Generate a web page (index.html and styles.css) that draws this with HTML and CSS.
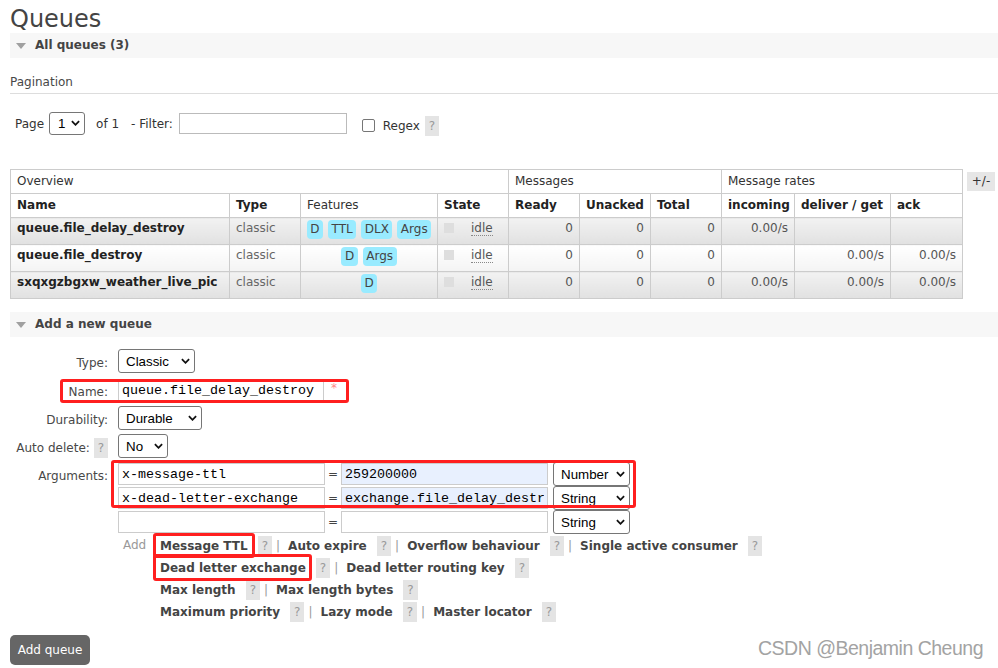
FILE: index.html
```html
<!DOCTYPE html>
<html lang="en">
<head>
<meta charset="utf-8">
<title>Queues</title>
<link rel="stylesheet" href="styles.css">
</head>
<body>
<div class="page">
  <h1 class="title">Queues</h1>
  <div class="section-head"><span class="tri"></span>All queues (3)</div>
  <h3 class="pag-title">Pagination</h3>
  <div class="pager">
    <span>Page</span>
    <span class="sel sel-page"><select><option>1</option></select><svg class="chev" viewBox="0 0 10 6"><path d="M1 1 L5 5 L9 1"/></svg></span>
    <span class="of">of 1</span>
    <span class="filter-label">- Filter:</span>
    <input class="filter" type="text">
    <span class="regex"><input type="checkbox" class="cb"><span class="regex-label">Regex</span><span class="help">?</span></span>
  </div>

  <div class="table-wrap">
    <table class="list">
      <colgroup>
        <col class="c-name"><col class="c-type"><col class="c-feat"><col class="c-state">
        <col class="c-num"><col class="c-num"><col class="c-num">
        <col class="c-inc"><col class="c-del"><col class="c-ack">
      </colgroup>
      <thead>
        <tr class="grp">
          <th colspan="4">Overview</th>
          <th colspan="3">Messages</th>
          <th colspan="3">Message rates</th>
        </tr>
        <tr class="cols">
          <th>Name</th><th>Type</th><th class="normal">Features</th><th>State</th>
          <th>Ready</th><th>Unacked</th><th>Total</th>
          <th>incoming</th><th>deliver / get</th><th>ack</th>
        </tr>
      </thead>
      <tbody>
        <tr class="alt1">
          <td class="qname">queue.file_delay_destroy</td>
          <td class="qtype">classic</td>
          <td class="feat"><div class="badges"><span class="badge">D</span><span class="badge">TTL</span><span class="badge">DLX</span><span class="badge">Args</span></div></td>
          <td><span class="status"></span><abbr class="idle">idle</abbr></td>
          <td class="r">0</td><td class="r">0</td><td class="r">0</td>
          <td class="r">0.00/s</td><td class="r"></td><td class="r"></td>
        </tr>
        <tr class="alt2">
          <td class="qname">queue.file_destroy</td>
          <td class="qtype">classic</td>
          <td class="feat"><div class="badges"><span class="badge">D</span><span class="badge">Args</span></div></td>
          <td><span class="status"></span><abbr class="idle">idle</abbr></td>
          <td class="r">0</td><td class="r">0</td><td class="r">0</td>
          <td class="r"></td><td class="r">0.00/s</td><td class="r">0.00/s</td>
        </tr>
        <tr class="alt1">
          <td class="qname">sxqxgzbgxw_weather_live_pic</td>
          <td class="qtype">classic</td>
          <td class="feat"><div class="badges"><span class="badge">D</span></div></td>
          <td><span class="status"></span><abbr class="idle">idle</abbr></td>
          <td class="r">0</td><td class="r">0</td><td class="r">0</td>
          <td class="r">0.00/s</td><td class="r">0.00/s</td><td class="r">0.00/s</td>
        </tr>
      </tbody>
    </table>
    <span class="toggle">+/-</span>
  </div>

  <div class="section-head second"><span class="tri"></span>Add a new queue</div>

  <div class="form">
    <div class="frow r-type">
      <label class="flabel">Type:</label>
      <span class="sel sel-type"><select><option>Classic</option></select><svg class="chev" viewBox="0 0 10 6"><path d="M1 1 L5 5 L9 1"/></svg></span>
    </div>
    <div class="frow r-name">
      <label class="flabel">Name:</label>
      <input class="tinput name-input" type="text" value="queue.file_delay_destroy">
      <span class="mand">*</span>
      <span class="mark mark-name"></span>
    </div>
    <div class="frow r-dur">
      <label class="flabel">Durability:</label>
      <span class="sel sel-dur"><select><option>Durable</option></select><svg class="chev" viewBox="0 0 10 6"><path d="M1 1 L5 5 L9 1"/></svg></span>
    </div>
    <div class="frow r-auto">
      <label class="flabel">Auto delete: <span class="help">?</span></label>
      <span class="sel sel-auto"><select><option>No</option></select><svg class="chev" viewBox="0 0 10 6"><path d="M1 1 L5 5 L9 1"/></svg></span>
    </div>
    <div class="frow r-args">
      <label class="flabel">Arguments:</label>
      <div class="args">
        <div class="arg">
          <input class="tinput kinput" type="text" value="x-message-ttl">
          <span class="eq">=</span>
          <input class="tinput vinput filled" type="text" value="259200000">
          <span class="sel sel-argtype"><select><option>Number</option></select><svg class="chev" viewBox="0 0 10 6"><path d="M1 1 L5 5 L9 1"/></svg></span>
        </div>
        <div class="arg">
          <input class="tinput kinput" type="text" value="x-dead-letter-exchange">
          <span class="eq">=</span>
          <input class="tinput vinput filled" type="text" value="exchange.file_delay_destroy">
          <span class="sel sel-argtype"><select><option>String</option></select><svg class="chev" viewBox="0 0 10 6"><path d="M1 1 L5 5 L9 1"/></svg></span>
        </div>
        <div class="arg">
          <input class="tinput kinput" type="text" value="">
          <span class="eq">=</span>
          <input class="tinput vinput" type="text" value="">
          <span class="sel sel-argtype"><select><option>String</option></select><svg class="chev" viewBox="0 0 10 6"><path d="M1 1 L5 5 L9 1"/></svg></span>
        </div>
      </div>
      <span class="mark mark-args"></span>
    </div>
    <div class="frow r-links">
      <span class="flabel-empty"></span>
      <span class="add-word">Add</span>
      <div class="links">
        <div class="lrow"><span class="alink">Message TTL</span><span class="help">?</span><span class="sep">|</span><span class="alink">Auto expire</span><span class="help">?</span><span class="sep">|</span><span class="alink">Overflow behaviour</span><span class="help">?</span><span class="sep">|</span><span class="alink">Single active consumer</span><span class="help">?</span></div>
        <div class="lrow"><span class="alink">Dead letter exchange</span><span class="help">?</span><span class="sep">|</span><span class="alink">Dead letter routing key</span><span class="help">?</span></div>
        <div class="lrow"><span class="alink">Max length</span><span class="help">?</span><span class="sep">|</span><span class="alink">Max length bytes</span><span class="help">?</span></div>
        <div class="lrow"><span class="alink">Maximum priority</span><span class="help">?</span><span class="sep">|</span><span class="alink">Lazy mode</span><span class="help">?</span><span class="sep">|</span><span class="alink">Master locator</span><span class="help">?</span></div>
      </div>
      <span class="mark mark-ttl"></span>
      <span class="mark mark-dlx"></span>
    </div>
  </div>

  <button class="add-btn" type="button">Add queue</button>
</div>
<div class="watermark">CSDN @Benjamin Cheung</div>
</body>
</html>
```

FILE: styles.css
```css
* { box-sizing: border-box; }
html, body { margin: 0; padding: 0; background: #fff; }
body {
  font-family: "DejaVu Sans", Verdana, sans-serif;
  font-size: 12px;
  color: #484848;
  width: 998px;
  height: 668px;
  overflow: hidden;
  position: relative;
}
.page { padding-left: 10px; }

.title {
  margin: 5px 0 0;
  font-size: 24px;
  font-weight: normal;
  line-height: 28px;
  color: #444;
}

.section-head {
  height: 25px;
  background: #f7f7f7;
  font-weight: bold;
  color: #444;
  padding-left: 6px;
  display: flex;
  align-items: center;
  line-height: 25px;
}
.section-head.second { margin-top: 13px; }
.tri {
  width: 0; height: 0;
  border-left: 5px solid transparent;
  border-right: 5px solid transparent;
  border-top: 6px solid #a0a0a0;
  margin-right: 9px;
}

.pag-title {
  margin: 17px 0 0;
  font-size: 12px;
  font-weight: normal;
  line-height: 14px;
  padding-bottom: 4px;
  border-bottom: 1px solid #ddd;
  color: #484848;
}

.pager {
  display: flex;
  align-items: center;
  margin-top: 18px;
  padding-left: 5px;
  height: 23px;
  color: #333;
}
.pager .sel { margin-left: 5px; }
.of { margin-left: 11px; }
.filter-label { margin-left: 12px; }
.filter {
  margin: 0 0 0 6px;
  width: 168px;
  height: 21px;
  border: 1px solid #bbb;
  padding: 0 3px;
}
.regex { display: flex; align-items: center; margin-top: 4px; margin-left: 15px; }
.cb {
  appearance: none;
  -webkit-appearance: none;
  width: 13px; height: 13px;
  margin: 0;
  border: 1px solid #767676;
  border-radius: 2px;
  background: #fff;
}
.regex-label { margin-left: 8px; }
.regex .help { margin-left: 5px; }

.help {
  background: #e4e4e4;
  color: #999;
  padding: 3px 4px;
  font-weight: normal;
}

/* selects */
.sel { position: relative; display: inline-block; }
.sel select {
  appearance: none;
  -webkit-appearance: none;
  display: block;
  height: 24px;
  margin: 0;
  border: 1px solid #767676;
  border-radius: 3px;
  background: #fff;
  color: #000;
  font-family: "Liberation Sans", Arial, sans-serif;
  font-size: 13.33px;
  padding: 0 0 0 7px;
}
.chev {
  position: absolute;
  right: 5px;
  top: 9px;
  width: 9px;
  height: 6px;
  fill: none;
  stroke: #111;
  stroke-width: 2;
  pointer-events: none;
}
.sel-page select { width: 36px; height: 23px; padding-left: 8px; }
.sel-page .chev { top: 8px; }
.sel-type select { width: 77px; }
.sel-dur select { width: 84px; }
.sel-auto select { width: 50px; }
.sel-argtype select { width: 77px; }

/* table */
.table-wrap {
  display: flex;
  align-items: flex-start;
  margin-top: 34px;
}
table.list {
  border-collapse: collapse;
  table-layout: fixed;
  width: 953px;
}
.c-name { width: 219px; }
.c-type { width: 71px; }
.c-feat { width: 137px; }
.c-state { width: 71px; }
.c-num { width: 71px; }
.c-inc { width: 73px; }
.c-del { width: 96px; }
.c-ack { width: 72px; }

table.list th, table.list td {
  border: 1px solid #ccc;
  text-align: left;
  vertical-align: top;
  white-space: nowrap;
  overflow: hidden;
}
table.list th {
  padding: 5px 6px;
  line-height: 13px;
  background: #fff;
  color: #222;
}
table.list tr.grp th { font-weight: normal; color: #333; }
table.list tr.cols th.normal { font-weight: normal; color: #333; }
table.list td {
  padding: 3px 6px 0;
  line-height: 14px;
  color: #555;
}
table.list tr.alt1 td { background: linear-gradient(to bottom, #f2f2f2 0%, #e1e1e1 100%); }
table.list tr.alt2 td { background: linear-gradient(to bottom, #ffffff 0%, #f4f4f4 100%); }
table.list td.qname { font-weight: bold; color: #222; }
table.list td.qtype { color: #666; }
table.list td.r { text-align: right; }
table.list td.feat { padding: 2px 0 5px; }
.badges { display: flex; justify-content: center; gap: 5px; }
.badge {
  display: inline-block;
  background: #99ebff;
  color: #444;
  padding: 2px 3.5px;
  line-height: 15px;
  border-radius: 4px;
}
.status {
  display: inline-block;
  width: 10px;
  height: 10px;
  background: #dedede;
  vertical-align: top;
  margin-top: 2px;
  margin-right: 17px;
}
.idle {
  display: inline-block;
  text-decoration: none;
  line-height: 14px;
  border-bottom: 1px dotted #888;
  color: #555;
}
.toggle {
  margin: 3px 0 0 4px;
  width: 28px;
  height: 19px;
  line-height: 19px;
  text-align: center;
  background: #e6e6e6;
  color: #333;
}

/* form */
.form { margin-top: 12px; }
.frow { display: flex; align-items: flex-start; position: relative; }
.flabel {
  width: 98px;
  margin-right: 10px;
  text-align: right;
  height: 24px;
  padding-top: 2px;
  line-height: 24px;
  color: #484848;
  white-space: nowrap;
}
.r-type { margin-bottom: 6px; }
.r-name { margin-bottom: 5px; }
.r-name .flabel { height: 22px; line-height: 22px; }
.r-dur { margin-bottom: 4px; }
.r-auto { margin-bottom: 4px; }
.r-args { margin-bottom: 1px; }

.tinput {
  height: 22px;
  margin: 0;
  border: 1px solid #ccc;
  padding: 0 3px;
  font-family: "Liberation Mono", "Courier New", monospace;
  font-size: 13.33px;
  color: #000;
  background: #fff;
}
.name-input { width: 206px; }
.mand { color: #f88; margin-left: 7px; padding-top: 2px; line-height: 14px; }

.args { display: flex; flex-direction: column; }
.arg { display: flex; align-items: center; height: 24px; }
.kinput, .vinput { width: 207px; }
.vinput.filled { background: #e8f0fe; }
.eq { width: 16px; text-align: center; color: #444; }
.arg .sel { margin-left: 5px; }

.flabel-empty { width: 108px; flex: none; }
.add-word {
  width: 42px;
  flex: none;
  padding-left: 5px;
  line-height: 20px;
  color: #999;
}
.links { display: flex; flex-direction: column; }
.lrow { line-height: 22px; white-space: nowrap; }
.alink { font-weight: bold; color: #444; }
.lrow .help { margin-left: 10px; }
.sep { color: #999; margin: 0 8px 0 4px; }

/* annotation boxes */
.mark {
  position: absolute;
  border: 3px solid #ff1f1f;
  border-radius: 3px;
  pointer-events: none;
}
.mark-name { left: 50px; top: 0; width: 289px; height: 24px; }
.mark-args { left: 101px; top: -2px; width: 525px; height: 48px; }
.mark-ttl { left: 143px; top: -2px; width: 102px; height: 25px; }
.mark-dlx { left: 143px; top: 19px; width: 159px; height: 27px; }

.add-btn {
  display: block;
  margin-top: 12px;
  width: 80px;
  height: 30px;
  padding: 0;
  border: 0;
  border-radius: 5px;
  background: #666;
  color: #fff;
  font-family: "DejaVu Sans", Verdana, sans-serif;
  font-size: 12px;
  line-height: 30px;
}

.watermark {
  position: absolute;
  right: 15px;
  top: 638px;
  font-family: "Liberation Sans", Arial, sans-serif;
  font-size: 19.5px;
  letter-spacing: -0.5px;
  line-height: 20px;
  color: #a3a3a3;
}
```
